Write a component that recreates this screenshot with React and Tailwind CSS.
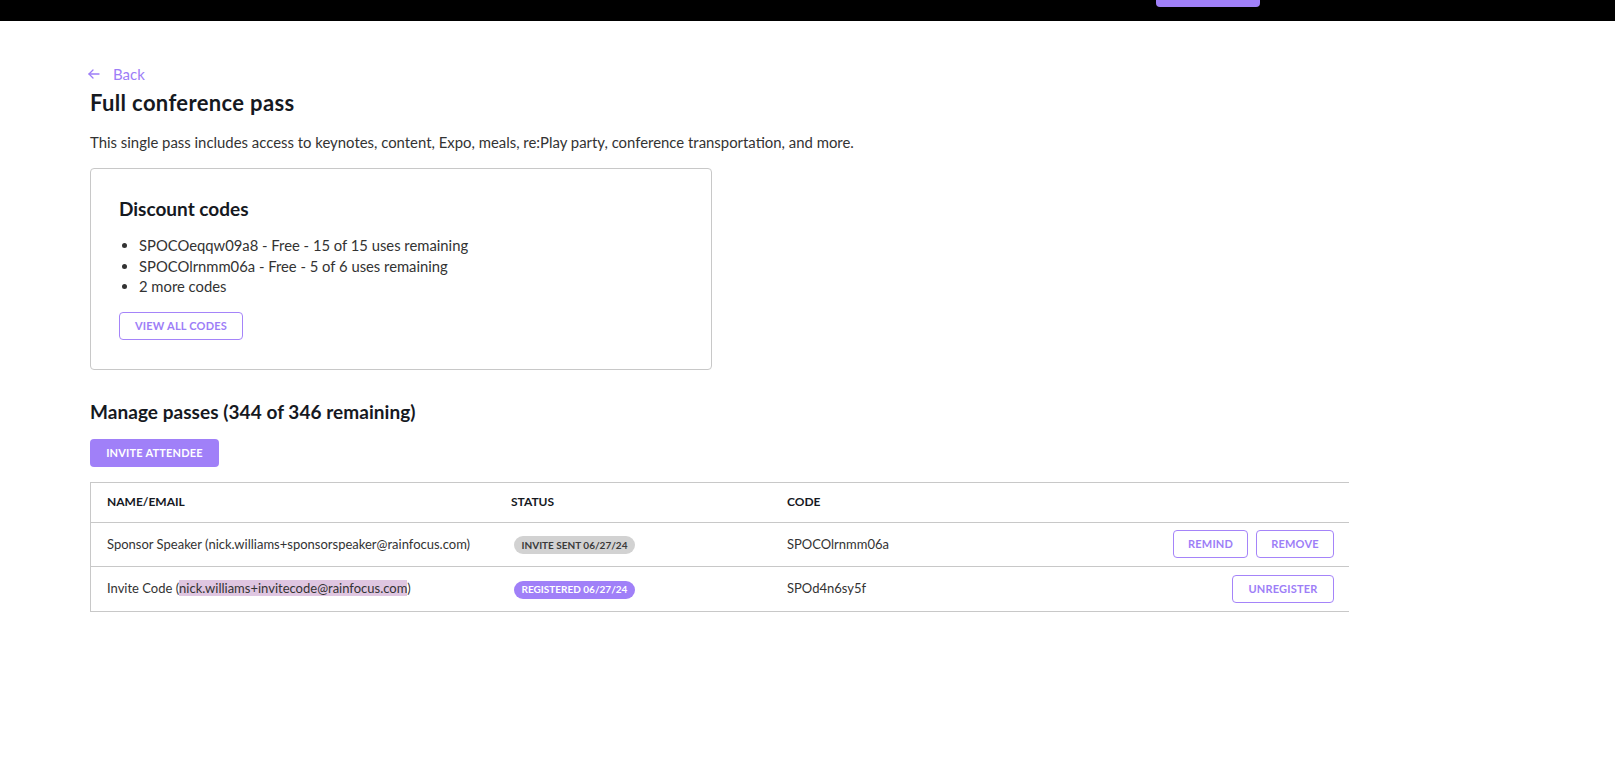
const codes = [
  "SPOCOeqqw09a8 - Free - 15 of 15 uses remaining",
  "SPOCOlrnmm06a - Free - 5 of 6 uses remaining",
  "2 more codes",
];

function OutlineButton({ children, className = "" }) {
  return (
    <button
      type="button"
      className={`h-[28px] rounded-[4px] border border-[#a584f9] bg-white px-[14px] text-[11px] font-bold uppercase tracking-[0.2px] text-[#9d7ef7] ${className}`}
    >
      {children}
    </button>
  );
}

function Badge({ tone, children }) {
  const styles =
    tone === "purple" ? "bg-[#a080f8] text-white" : "bg-[#d2d2d2] text-[#3a3a3a]";
  return (
    <span className={`inline-flex h-[18px] w-[121px] items-center justify-center rounded-full text-[10px] font-bold uppercase ${styles}`}>
      {children}
    </span>
  );
}

export default function App() {
  return (
    <div className="min-h-screen bg-white font-['Lato','Liberation_Sans',sans-serif] text-[#333333]">
      <header className="h-[21px] bg-black pl-[1156px]">
        <div className="h-[7px] w-[104px] rounded-b-[4px] bg-[#a080f8]" />
      </header>

      <main className="px-[90px] pt-[43px]">
        <a href="#" className="-ml-[2px] flex h-[20px] items-center gap-[13px] text-[15px] text-[#9d7ef7]">
          <svg width="12" height="10" viewBox="0 0 12 10" fill="none" stroke="currentColor" strokeWidth="1.3" strokeLinecap="round" strokeLinejoin="round">
            <path d="M11 5H1" />
            <path d="M5 1L1 5l4 4" />
          </svg>
          <span>Back</span>
        </a>
        <h1 className="mt-[5px] text-[22px] font-bold leading-[28px] tracking-[0.35px] text-[#16191f]">Full conference pass</h1>
        <p className="mt-[15px] text-[14.9px] leading-[20px]">
          This single pass includes access to keynotes, content, Expo, meals, re:Play party, conference transportation, and more.
        </p>

        <section className="mt-[16px] w-[622px] rounded-[4px] border border-[#c8c8c8] px-[28px] pb-[29px] pt-[28px]">
          <h2 className="text-[19px] font-bold leading-[24px] text-[#16191f]">Discount codes</h2>
          <ul className="mt-[14px] list-disc pl-[20px] text-[14.8px] leading-[20.6px]">
            {codes.map((code) => (
              <li key={code}>{code}</li>
            ))}
          </ul>
          <OutlineButton className="mt-[15px] w-[124px]">View all codes</OutlineButton>
        </section>

        <h2 className="mt-[30px] text-[19px] font-bold leading-[24px] tracking-[0.05px] text-[#16191f]">Manage passes (344 of 346 remaining)</h2>
        <button
          type="button"
          className="mt-[15px] h-[28px] w-[129px] rounded-[4px] bg-[#a080f8] text-[11px] font-bold uppercase tracking-[0.2px] text-white"
        >
          Invite attendee
        </button>

        <div className="mt-[15px] w-[1259px] border-y border-l border-[#c8c8c8] text-[13px]">
          <div className="grid h-[40px] grid-cols-[405px_276px_1fr_auto] items-center border-b border-[#c8c8c8] text-[12px] font-bold uppercase text-[#16191f]">
            <div className="pl-[16px]">Name/Email</div>
            <div className="pl-[15px]">Status</div>
            <div className="pl-[15px]">Code</div>
            <div />
          </div>

          <div className="grid h-[44px] grid-cols-[405px_276px_1fr_auto] items-center border-b border-[#c8c8c8]">
            <div className="pl-[16px]">Sponsor Speaker (nick.williams+sponsorspeaker@rainfocus.com)</div>
            <div className="pl-[18px]">
              <Badge tone="gray">Invite sent 06/27/24</Badge>
            </div>
            <div className="pl-[15px]">SPOCOlrnmm06a</div>
            <div className="flex gap-[8px] pr-[15px]">
              <OutlineButton className="w-[75px]">Remind</OutlineButton>
              <OutlineButton className="w-[78px]">Remove</OutlineButton>
            </div>
          </div>

          <div className="grid h-[44px] grid-cols-[405px_276px_1fr_auto] items-center">
            <div className="pl-[16px]">
              Invite Code (<span className="bg-[#dfc6e1]">nick.williams+invitecode@rainfocus.com</span>)
            </div>
            <div className="pl-[18px]">
              <Badge tone="purple">Registered 06/27/24</Badge>
            </div>
            <div className="pl-[15px]">SPOd4n6sy5f</div>
            <div className="flex pr-[15px]">
              <OutlineButton className="w-[102px]">Unregister</OutlineButton>
            </div>
          </div>
        </div>
      </main>
    </div>
  );
}
